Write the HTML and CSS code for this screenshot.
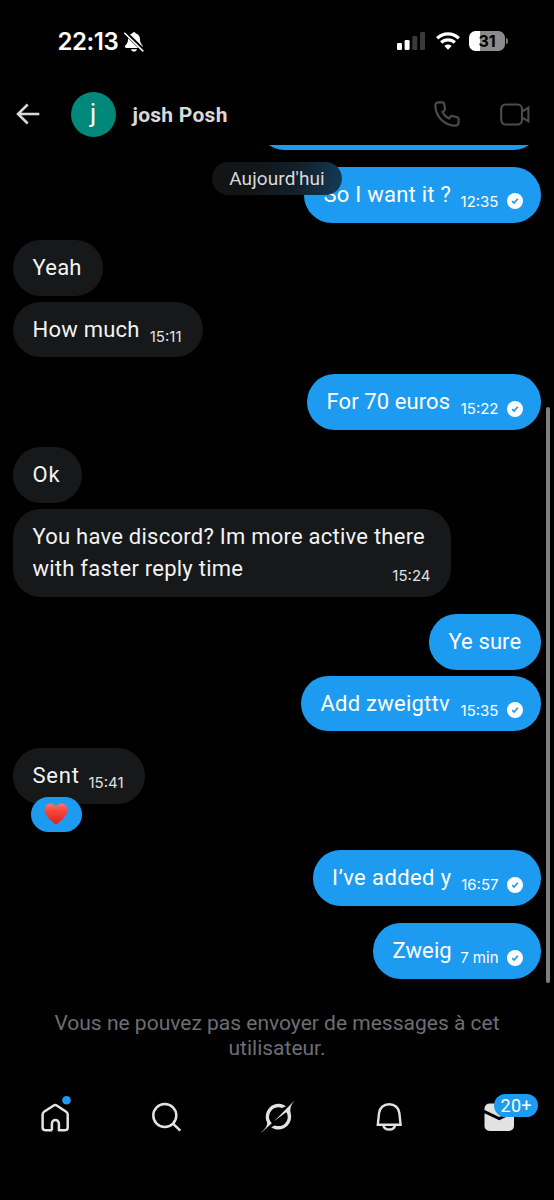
FILE: index.html
```html
<!DOCTYPE html>
<html lang="fr">
<head>
<meta charset="utf-8">
<title>josh Posh</title>
<link rel="stylesheet" href="styles.css">
</head>
<body>
<svg class="defs" aria-hidden="true">
  <symbol id="check" viewBox="0 0 16 16">
    <circle cx="8" cy="8" r="8" fill="#fff"/>
    <path d="M5.2 8.2 7.1 10.1 10.8 5.7" fill="none" stroke="#1d9bf0" stroke-width="1.7"/>
  </symbol>
</svg>
<div class="screen">
  <div class="status">
    <div class="status-left">
      <span class="clock">22:13</span>
      <svg class="mute" viewBox="0 0 20 20">
        <path fill="#fff" d="M10 0.2c1.2 0 1.7.7 1.9 1.4 2.7.8 4.1 3 4.1 5.9 0 4.3 2.8 5.3 2.8 7.2 0 .8-.5 1.2-1.3 1.2H2.300c-.8 0-1.300-.4-1.300-1.200C1 12.800 4 11.800 4 7.500c0-2.900 1.400-5.100 4.100-5.900.2-.7.7-1.400 1.900-1.400zM7 17.200h6c-.3 1.500-1.500 2.300-3 2.300s-2.700-.8-3-2.300z"/>
        <path d="M1.300 0.800 19.400 18.400" stroke="#000" stroke-width="4"/>
        <path d="M0.800 1.300 18.800 18.900" stroke="#fff" stroke-width="1.600" stroke-linecap="round"/>
      </svg>
    </div>
    <div class="status-right">
      <svg class="signal" viewBox="0 0 28 18">
        <rect x="0" y="11" width="5" height="7" rx="1.300" fill="#fff"/>
        <rect x="7.600" y="8" width="5" height="10" rx="1.300" fill="#fff"/>
        <rect x="15.300" y="4" width="5" height="14" rx="1.300" fill="#3a3a3a"/>
        <rect x="23" y="0" width="5" height="18" rx="1.300" fill="#3a3a3a"/>
      </svg>
      <svg class="wifi" viewBox="0 0 24 18">
        <g fill="none" stroke="#fff" stroke-width="3.300">
          <path d="M1.200 6.300a15.600 15.600 0 0 1 21.600 0"/>
          <path d="M5.200 10.500a9.900 9.900 0 0 1 13.600 0"/>
        </g>
        <path fill="#fff" d="M12 17.800 8.300 14a5.400 5.400 0 0 1 7.400 0z"/>
      </svg>
      <div class="battery"><span>31</span></div>
    </div>
  </div>

  <header class="header">
    <svg class="back" viewBox="0 0 24 22"><path d="M23.300 11H2M11.700 1.500 2 11l9.700 9.500" fill="none" stroke="#d9d9d9" stroke-width="2.500"/></svg>
    <div class="avatar">j</div>
    <h1 class="name">josh Posh</h1>
    <svg class="phone" viewBox="0 0 24 24"><path fill="none" stroke="#4c4c4c" stroke-width="2" stroke-linejoin="round" d="M8 1.300H4.200C2.300 1.300 1.100 2.600 1.200 4.500 1.800 14.700 9.300 22.200 19.500 22.800c1.900.1 3.200-1.100 3.200-3v-3.200c0-.8-.5-1.400-1.200-1.600l-4.500-1.200c-.7-.2-1.300 0-1.700.5l-1.400 1.900C11.400 15 9 12.600 7.800 10.100l1.900-1.400c.5-.4.7-1 .5-1.700L9.300 2.500C9.100 1.800 8.700 1.300 8 1.300z"/></svg>
    <svg class="video" viewBox="0 0 30 23"><g fill="none" stroke="#4c4c4c" stroke-width="2.100"><rect x="1.200" y="1.500" width="20.800" height="20" rx="4.500"/><path d="M22 8.700 28.400 4.700V18.300L22 14.300"/></g></svg>
  </header>

  <main class="chat">
    <div class="bubble out w284 previous"></div>
    <div class="bubble out w237 gap"><p>So I want it ?</p><span class="meta">12:35<svg class="tick"><use href="#check"/></svg></span></div>
    <div class="bubble in gap w90"><p>Yeah</p></div>
    <div class="bubble in w190"><p>How much</p><span class="meta">15:11</span></div>
    <div class="bubble out w234 gap"><p class="tight">For 70 euros</p><span class="meta">15:22<svg class="tick"><use href="#check"/></svg></span></div>
    <div class="bubble in gap w69"><p class="wide">Ok</p></div>
    <div class="bubble in tall w438"><p>You have discord? Im more active there<br>with faster reply time</p><span class="meta">15:24</span></div>
    <div class="bubble out gap w112"><p class="tight">Ye sure</p></div>
    <div class="bubble out w240"><p>Add zweigttv</p><span class="meta">15:35<svg class="tick"><use href="#check"/></svg></span></div>
    <div class="bubble in gap reacted w132"><p class="wide">Sent</p><span class="meta">15:41</span>
      <span class="reaction"><svg viewBox="0 0 24 22">
        <defs>
          <linearGradient id="heart" x1="0" y1="0" x2="0" y2="1"><stop offset="0" stop-color="#ff7a6c"/><stop offset=".3" stop-color="#fa4a3f"/><stop offset="1" stop-color="#d81f1c"/></linearGradient>
        </defs>
        <path fill="url(#heart)" d="M12 21.800C8.500 18.800.6 13.500.6 6.700.6 3 3.300.5 6.500.5c2.500 0 4.500 1.400 5.500 3.700C13 1.900 15 .5 17.500.5c3.200 0 5.900 2.500 5.900 6.200 0 6.800-7.900 12.100-11.400 15.100z"/>
      </svg></span>
    </div>
    <div class="bubble out w228"><p class="airy">I’ve added y</p><span class="meta">16:57<svg class="tick"><use href="#check"/></svg></span></div>
    <div class="bubble out w168 gap"><p class="tight">Zweig</p><span class="meta">7 min<svg class="tick"><use href="#check"/></svg></span></div>
    <div class="day">Aujourd'hui</div>
    <div class="scrollbar"></div>
  </main>

  <p class="notice">Vous ne pouvez pas envoyer de messages à cet<br>utilisateur.</p>

  <nav class="tabs">
    <div class="tab"><svg viewBox="0 0 36 36"><path fill="none" stroke="#e2e2e2" stroke-width="2.500" stroke-linejoin="round" d="M15.200 31.200H8.200q-2.600 0-2.600-2.600V15.600q0-1.900 1.500-2.900L16.700 6.500q1.500-1 3 0L29.200 12.700q1.500 1 1.500 2.900V28.600q0 2.600-2.600 2.600H21.900V24.500a3.500 3.500 0 0 0-7 0V31.200"/><circle cx="29.500" cy="1.300" r="4.300" fill="#1d9bf0"/></svg></div>
    <div class="tab"><svg viewBox="0 0 36 36"><g fill="none" stroke="#e2e2e2" stroke-width="2.500"><circle cx="16.800" cy="16.500" r="11.500"/><path d="M25 24.600 32.300 31.700"/></g></svg></div>
    <div class="tab"><svg class="grok" viewBox="0 0 33 32"><path fill="#e2e2e2" d="M12.745 20.540l10.970-8.190c.539-.4 1.307-.244 1.564.38 1.349 3.288.746 7.241-1.938 9.955-2.683 2.714-6.417 3.310-9.830 1.954l-3.728 1.745c5.347 3.697 11.840 2.782 15.898-1.324 3.219-3.255 4.216-7.692 3.284-11.693l.008.009c-1.351-5.878.332-8.227 3.782-13.031L33 0l-4.540 4.590v-.014L12.743 20.544M10.480 22.531c-3.837-3.707-3.175-9.446.1-12.755 2.420-2.449 6.388-3.448 9.852-1.979l3.720-1.737c-.67-.49-1.530-1.017-2.515-1.387-4.455-1.854-9.789-.931-13.410 2.728-3.483 3.523-4.579 8.940-2.697 13.561 1.405 3.454-.899 5.898-3.220 8.364C1.490 30.200.666 31.074 0 32l10.478-9.466"/></svg></div>
    <div class="tab"><svg viewBox="0 0 36 36"><g fill="none" stroke="#e2e2e2" stroke-width="2.400"><path d="M7.800 25.700 9 14.300C9.500 9 13.600 5.200 19.200 5.200S28.900 9 29.400 14.300L30.600 25.700z"/><path d="M13.300 26.200a6 5.300 0 0 0 11.800 0"/></g></svg></div>
    <div class="tab"><svg viewBox="0 0 36 36"><path fill="#e2e2e2" d="M3.500 11V9.500a5 5 0 0 1 5-5H28a5 5 0 0 1 5 5V11L18.300 17.900zM3.500 14.200 18.300 21.200 33 14.200V27a5 5 0 0 1-5 5H8.500a5 5 0 0 1-5-5z"/></svg><span class="badge">20+</span></div>
  </nav>
</div>
</body>
</html>
```
FILE: styles.css
```css
* { box-sizing: border-box; }
body { margin: 0; background: #000; font-family: Roboto, "Liberation Sans", sans-serif; color: #f2f3f4; }
p, h1 { margin: 0; }
svg { display: block; flex: none; overflow: visible; }
.defs { display: none; }

.screen { width: 554px; height: 1200px; background: #000; display: flex; flex-direction: column; overflow: hidden; }

.status { height: 84px; flex: none; padding: 0 49px 0 57.500px; display: flex; justify-content: space-between; align-items: flex-start; }
.status-left { display: flex; padding-top: 27px; gap: 6px; }
.clock { font: 600 24px/30px Inter, sans-serif; letter-spacing: -0.400px; color: #fff; }
.mute { width: 20px; height: 20px; margin-top: 4.500px; }
.status-right { display: flex; padding-top: 31px; align-items: flex-start; }
.signal { width: 28px; height: 18px; margin-top: 1px; }
.wifi { width: 24px; height: 18px; margin: 1px 9.500px 0 10.500px; }
.battery { position: relative; width: 36px; height: 20px; border-radius: 6.500px; background: linear-gradient(90deg, #fff 11px, #8b8b8b 11px); color: #000; font: 700 16px/21px Inter, sans-serif; text-align: center; letter-spacing: -0.200px; }
.battery::after { content: ""; position: absolute; right: -2.500px; top: 7px; width: 2px; height: 6px; border-radius: 0 2px 2px 0; background: #777; }

.header { height: 61px; flex: none; padding: 0 24.500px 0 16px; display: flex; align-items: center; }
.back { width: 24px; height: 22px; margin-top: -1px; }
.avatar { width: 45px; height: 45px; margin: -1px 17px 0 30.500px; border-radius: 50%; background: #00897b; color: #fff; font-size: 26px; line-height: 43px; text-align: center; }
.name { flex: 1; font-size: 21px; line-height: 28px; font-weight: 700; color: #d9d9d9; letter-spacing: 0.250px; }
.phone { width: 26px; height: 26px; margin: -1px 40px 0 0; }
.video { width: 30px; height: 23px; margin-top: -1px; }

.chat { position: relative; height: 840px; flex: none; padding: 0 13px; overflow: hidden; display: flex; flex-direction: column; align-items: flex-start; }
.bubble { position: relative; flex: none; min-height: 55.600px; margin-top: 6px; padding: 12px 20.500px 11.600px 19.500px; border-radius: 27.800px; display: flex; justify-content: space-between; font-size: 22px; line-height: 32px; letter-spacing: 0.240px; white-space: nowrap; }
.in { background: #16181a; }
.out { background: #1d9bf0; align-self: flex-end; color: #fff; padding-right: 18px; }
.gap { margin-top: 17.200px; }
.previous { margin-top: -50.600px; }
.tall { height: 88px; }
.tall p { width: 0; }
.reacted { margin-bottom: 40.600px; }
.tight { letter-spacing: 0.100px; }
.airy { letter-spacing: 0.400px; }
.wide { letter-spacing: 0.800px; }
.meta { align-self: flex-end; margin-bottom: -1px; display: flex; align-items: center; gap: 8.500px; font: 400 15px/20px Inter, sans-serif; letter-spacing: 0; }
.in .meta { color: #e0e1e2; }
.in:not(.tall) .meta { margin-right: 1px; }
.tick { width: 16px; height: 16px; margin-top: -1.500px; }

.w69 { width: 69px; }
.w90 { width: 90px; }
.w112 { width: 112px; }
.w132 { width: 132px; }
.w168 { width: 168px; }
.w190 { width: 190px; }
.w228 { width: 228.500px; }
.w234 { width: 234px; }
.w237 { width: 237px; }
.w240 { width: 240px; }
.w284 { width: 284px; }
.w438 { width: 438px; }

.reaction { position: absolute; left: 18px; top: 48.300px; width: 51px; height: 35px; border-radius: 17.500px; background: #1d9bf0; display: flex; align-items: center; justify-content: center; padding-right: 1px; }
.reaction svg { width: 24px; height: 22px; }

.day { position: absolute; left: 212px; top: 17px; width: 130px; height: 33px; border-radius: 16.500px; background: linear-gradient(100deg, #121416 30%, #12202b 65%, #143c5a 100%); color: #d8d9da; font-size: 19px; line-height: 33px; letter-spacing: 0.100px; text-align: center; }
.scrollbar { position: absolute; right: 4.500px; top: 262px; width: 4px; height: 576px; border-radius: 2px; background: #7f7f7f; }

.notice { flex: none; margin-top: 25.500px; text-align: center; font-size: 21px; line-height: 25.400px; color: #6c6f73; }

.tabs { flex: none; margin-top: 37.500px; display: grid; grid-template-columns: repeat(5, 1fr); }
.tab { position: relative; display: flex; justify-content: center; height: 36px; }
.tab svg { width: 36px; height: 36px; }
.tab .grok { width: 34px; height: 33px; margin: 1px 0 0 2px; }
.badge { position: absolute; left: 51px; top: -4.500px; width: 44px; height: 23px; border-radius: 11.500px; background: #1d9bf0; color: #fff; font-size: 18px; line-height: 23px; text-align: center; letter-spacing: 0.300px; }
```
